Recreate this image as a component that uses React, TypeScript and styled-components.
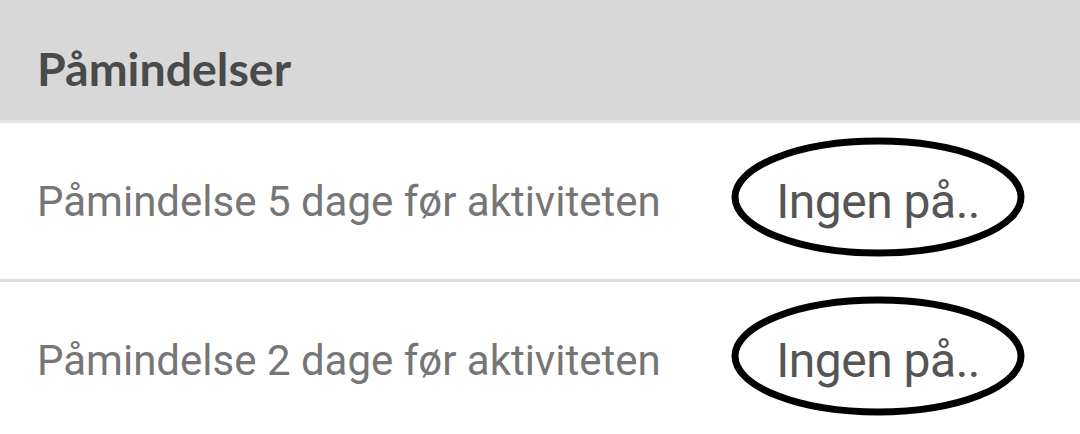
import React from 'react';
import styled, { createGlobalStyle } from 'styled-components';

const GlobalStyle = createGlobalStyle`
  html, body {
    margin: 0;
    padding: 0;
    background: #fff;
  }
`;

const Root = styled.div`
  width: 1080px;
  height: 434px;
  overflow: hidden;
  background: #fff;
`;

const Header = styled.div`
  height: 120px;
  display: flex;
  align-items: center;
  padding: 0 37px;
  background: #d8d8d8;
  border-bottom: 3px solid #e3e3e3;
`;

const Title = styled.h1`
  margin: 0;
  font-family: Lato, 'Liberation Sans', sans-serif;
  font-weight: 700;
  font-size: 46.5px;
  color: #4a4a4a;
  padding-top: 16px;
`;

const Row = styled.div<{ $last?: boolean }>`
  height: 156px;
  display: flex;
  align-items: center;
  justify-content: space-between;
  padding: 0 100px 0 37px;
  border-bottom: ${(p) => (p.$last ? 'none' : '3px solid #dcdcdc')};
`;

const Label = styled.span`
  font-family: Roboto, 'Liberation Sans', sans-serif;
  font-size: 42px;
  color: #767676;
`;

const Value = styled.span`
  position: relative;
  font-family: Roboto, 'Liberation Sans', sans-serif;
  font-size: 48px;
  letter-spacing: -0.5px;
  color: #555;
`;

const Circle = styled.svg`
  position: absolute;
  left: 50%;
  top: 50%;
  width: 294px;
  height: 120px;
  transform: translate(-50%, calc(-50% - 4px));
  overflow: visible;
  pointer-events: none;
`;

const Marker = () => (
  <Circle viewBox="0 0 294 120">
    <ellipse cx="147" cy="60" rx="143" ry="56" fill="none" stroke="#000" strokeWidth="7" />
  </Circle>
);

const reminders = [
  'Påmindelse 5 dage før aktiviteten',
  'Påmindelse 2 dage før aktiviteten',
];

export default function App() {
  return (
    <Root>
      <GlobalStyle />
      <Header>
        <Title>Påmindelser</Title>
      </Header>
      {reminders.map((r, i) => (
        <Row key={r} $last={i === reminders.length - 1}>
          <Label>{r}</Label>
          <Value>
            Ingen på..
            <Marker />
          </Value>
        </Row>
      ))}
    </Root>
  );
}
